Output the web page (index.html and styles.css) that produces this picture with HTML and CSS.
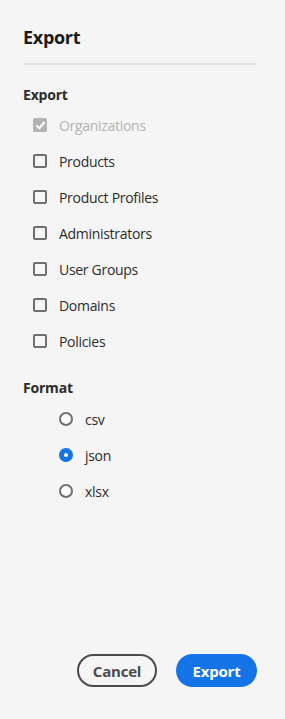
FILE: index.html
```html
<!DOCTYPE html>
<html lang="en">
<head>
  <meta charset="UTF-8">
  <title>Export</title>
  <link rel="stylesheet" href="styles.css">
</head>
<body>
  <div class="dialog">
    <h1>Export</h1>
    <hr class="divider">

    <div class="group">
      <h3>Export</h3>
      <label class="check disabled"><span class="box checked"></span>Organizations</label>
      <label class="check"><span class="box"></span>Products</label>
      <label class="check"><span class="box"></span>Product Profiles</label>
      <label class="check"><span class="box"></span>Administrators</label>
      <label class="check"><span class="box"></span>User Groups</label>
      <label class="check"><span class="box"></span>Domains</label>
      <label class="check"><span class="box"></span>Policies</label>
    </div>

    <div class="group format">
      <h3>Format</h3>
      <label class="radio"><span class="dot"></span>csv</label>
      <label class="radio"><span class="dot selected"></span>json</label>
      <label class="radio"><span class="dot"></span>xlsx</label>
    </div>

    <div class="buttons">
      <button class="btn secondary">Cancel</button>
      <button class="btn primary">Export</button>
    </div>
  </div>
</body>
</html>
```
FILE: styles.css
```css
body {
  margin: 0;
  background: #f5f5f5;
  font-family: "Open Sans", "Liberation Sans", sans-serif;
  color: #2c2c2c;
}
.dialog {
  height: 719px;
  box-sizing: border-box;
  padding: 0 28px 0 23px;
  display: flex;
  flex-direction: column;
}
h1 {
  font-size: 18px;
  font-weight: 700;
  line-height: 24px;
  margin: 25px 0 0;
  color: #1a1a1a;
  letter-spacing: -0.3px;
}
.divider {
  border: 0;
  height: 2px;
  background: #e1e1e1;
  margin: 14px 0 0;
}
.group {
  display: flex;
  flex-direction: column;
}
.group h3 {
  font-size: 14px;
  font-weight: 700;
  line-height: 18px;
  margin: 21px 0 3px;
  letter-spacing: -0.2px;
}
.format h3 {
  margin-top: 20px;
  margin-bottom: 4px;
}
.check, .radio {
  display: flex;
  align-items: center;
  height: 36px;
  font-size: 14px;
  letter-spacing: -0.3px;
  color: #2c2c2c;
}
.check { padding-left: 10px; }
.radio { padding-left: 36px; }
.box {
  width: 14px;
  height: 14px;
  box-sizing: border-box;
  border: 2px solid #707070;
  border-radius: 2px;
  margin-right: 12px;
  position: relative;
}
.check.disabled { color: #b3b3b3; }
.box.checked {
  background: #b3b3b3;
  border-color: #b3b3b3;
}
.box.checked::after {
  content: "";
  position: absolute;
  left: 3px;
  top: 0;
  width: 3px;
  height: 7px;
  border: solid #fff;
  border-width: 0 2px 2px 0;
  transform: rotate(40deg);
}
.dot {
  width: 14px;
  height: 14px;
  box-sizing: border-box;
  border: 2px solid #707070;
  border-radius: 50%;
  margin-right: 12px;
  background: #fff;
}
.dot.selected {
  border: 5px solid #1473e6;
}
.buttons {
  margin-top: auto;
  margin-bottom: 32px;
  display: flex;
  justify-content: flex-end;
  gap: 19px;
}
.btn {
  height: 33px;
  border-radius: 17px;
  font-family: inherit;
  font-size: 15px;
  font-weight: 700;
  padding: 0;
  letter-spacing: -0.2px;
}
.secondary {
  width: 80px;
  background: transparent;
  border: 2px solid #4b4b4b;
  color: #4b4b4b;
}
.primary {
  width: 81px;
  background: #1473e6;
  border: 0;
  color: #fff;
}
```
